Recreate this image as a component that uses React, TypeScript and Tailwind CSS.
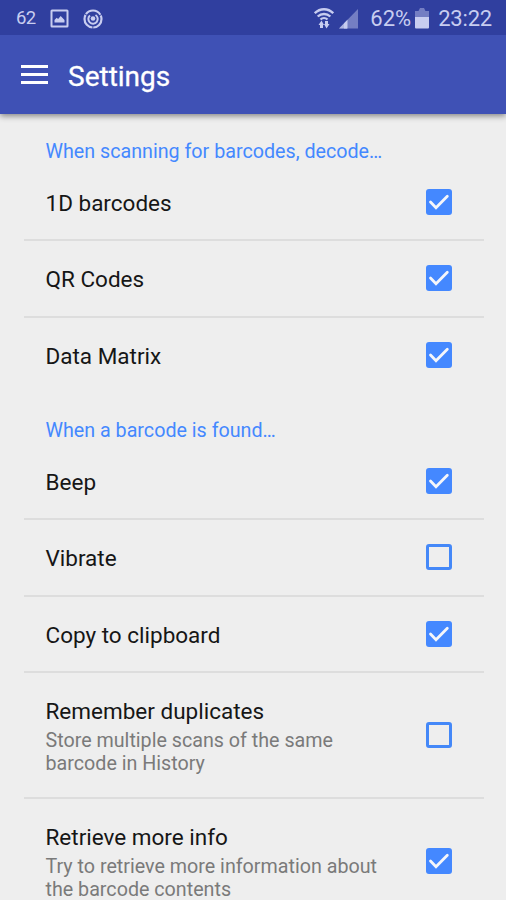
import clsx from "clsx";

type Option = {
  title: string;
  summary?: string[];
  checked: boolean;
};

type Section = {
  heading: string;
  options: Option[];
};

const sections: Section[] = [
  {
    heading: "When scanning for barcodes, decode…",
    options: [
      { title: "1D barcodes", checked: true },
      { title: "QR Codes", checked: true },
      { title: "Data Matrix", checked: true },
    ],
  },
  {
    heading: "When a barcode is found…",
    options: [
      { title: "Beep", checked: true },
      { title: "Vibrate", checked: false },
      { title: "Copy to clipboard", checked: true },
      {
        title: "Remember duplicates",
        summary: ["Store multiple scans of the same", "barcode in History"],
        checked: false,
      },
      {
        title: "Retrieve more info",
        summary: ["Try to retrieve more information about", "the barcode contents"],
        checked: true,
      },
    ],
  },
];

const StatusBar = () => {
  return (
    <div className="flex h-[35px] items-center bg-[#303f9f] pl-4 pr-[14px] pt-[2px] text-[#c8cdf0]">
      <span className="w-[34px] text-[18.5px] leading-none tracking-[-0.6px]">62</span>
      {/* picture */}
      <svg className="h-[19px] w-[19px]" viewBox="0 0 19 19" fill="none">
        <rect x="1.5" y="1.5" width="16" height="16" rx="0.5" stroke="currentColor" strokeWidth="2" />
        <path d="M4.5 13.5v-2.6l2.2-2.2 1.4 1.4 2.6-3 3.8 4v2.4z" fill="currentColor" />
      </svg>
      {/* target */}
      <svg className="ml-[14px] h-5 w-5" viewBox="0 0 20 20" fill="none" stroke="currentColor">
        <circle cx="10" cy="10" r="8.5" strokeWidth="2.2" strokeDasharray="17 0.8" strokeDashoffset="4" />
        <path d="M12.5 6A4.7 4.7 0 1 1 7 6.4" strokeWidth="2" />
        <circle cx="10" cy="9.5" r="2.3" fill="currentColor" stroke="none" />
      </svg>
      {/* wifi with transfer arrows */}
      <svg className="ml-auto h-[21px] w-5" viewBox="0 0 20 21" fill="none" stroke="currentColor" strokeWidth="2.4">
        <path d="M.8 5.2C6-.1 14-.1 19.2 5.2" />
        <path d="M3.7 8.5c3.6-3.400 9-3.400 12.600 0" />
        <path d="M6.5 11.500c2-1.900 5-1.900 7 0" />
        <path d="M7.500 20v-4.500M12.500 13v4.500" strokeWidth="3" />
        <path d="M4.500 17 7.500 12.500l2.500 4.500zM10 16h5.500L12.500 20.500z" fill="currentColor" stroke="none" />
      </svg>
      {/* signal */}
      <svg className="ml-[5px] h-5 w-[19px]" viewBox="0 0 19 20" fill="currentColor">
        <path d="M0 19.500 19 0v19.500z" opacity="0.45" />
        <path d="M0 19.500 8.700 10.600v8.900z" opacity="0.7" />
        <path d="M5 19.500v-5L8 11.400v8.100z" />
      </svg>
      <span className="ml-[12px] text-[22px] leading-none">62%</span>
      {/* battery */}
      <svg className="ml-1 mb-px h-[21px] w-[14px]" viewBox="0 0 14 21" fill="currentColor">
        <path d="M0 3h3.500L5 0h4l1.500 3H14v6H0z" opacity="0.45" />
        <path d="M0 9h14v10.500a1 1 0 0 1-1 1H1a1 1 0 0 1-1-1z" />
      </svg>
      <span className="ml-[9px] pt-px text-[22px] leading-none tracking-[-0.2px]">23:22</span>
    </div>
  );
};

const Toolbar = () => {
  return (
    <div className="flex h-[79px] items-center bg-[#3f51b5] pl-[21px]">
      <button className="flex w-[27px] flex-col gap-[5px]" aria-label="Menu">
        <span className="h-[3px] bg-white"></span>
        <span className="h-[3px] bg-white"></span>
        <span className="h-[3px] bg-white"></span>
      </button>
      <h1 className="ml-5 pt-[5px] text-[28px] leading-none text-white [-webkit-text-stroke:0.3px_white]">
        Settings
      </h1>
    </div>
  );
};

const CheckBox = ({ checked }: { checked: boolean }) => {
  return (
    <span
      className={clsx(
        "flex h-[26px] w-[26px] shrink-0 items-center justify-center rounded-[3px]",
        checked ? "bg-[#4488ff]" : "border-3 border-[#4488f8]"
      )}
    >
      {checked && (
        <svg className="h-[26px] w-[26px]" viewBox="0 0 26 26" fill="none">
          <path
            d="M4.5 13l5.5 5.7L21.3 7.2"
            stroke="#f5f6fa"
            strokeWidth="2.8"
            strokeLinecap="round"
          />
        </svg>
      )}
    </span>
  );
};

const OptionRow = ({ title, summary, checked }: Option) => {
  return (
    <li
      className={clsx(
        "flex items-center justify-between border-b-2 border-[#dddddd] pl-[21.5px] pr-8 last:border-transparent",
        summary ? "h-[126px]" : "h-[76.34px]"
      )}
    >
      <div className="pt-[2px]">
        <p className="text-[22.5px] leading-[28px] text-[#161616]">{title}</p>
        {summary && (
          <div className="pt-1 text-[19.7px] leading-[23px] text-[#7a7a7a]">
            {summary.map((line) => (
              <p key={line} className="whitespace-nowrap">
                {line}
              </p>
            ))}
          </div>
        )}
      </div>
      <CheckBox checked={checked} />
    </li>
  );
};

const App = () => {
  return (
    <div className="h-[900px] w-[506px] overflow-hidden bg-[#eeeeee] font-['Roboto',sans-serif]">
      <header className="relative shadow-[0_2px_6px_rgba(0,0,0,0.45)]">
        <StatusBar />
        <Toolbar />
      </header>
      <main className="pl-6 pr-[22px] pt-px">
        {sections.map((section) => (
          <section key={section.heading}>
            <h2 className="flex h-[50px] items-end pl-[21.5px] text-[19.7px] leading-[26px] text-[#4488ff]">
              {section.heading}
            </h2>
            <ul>
              {section.options.map((option) => (
                <OptionRow key={option.title} {...option} />
              ))}
            </ul>
          </section>
        ))}
      </main>
    </div>
  );
};

export default App;
